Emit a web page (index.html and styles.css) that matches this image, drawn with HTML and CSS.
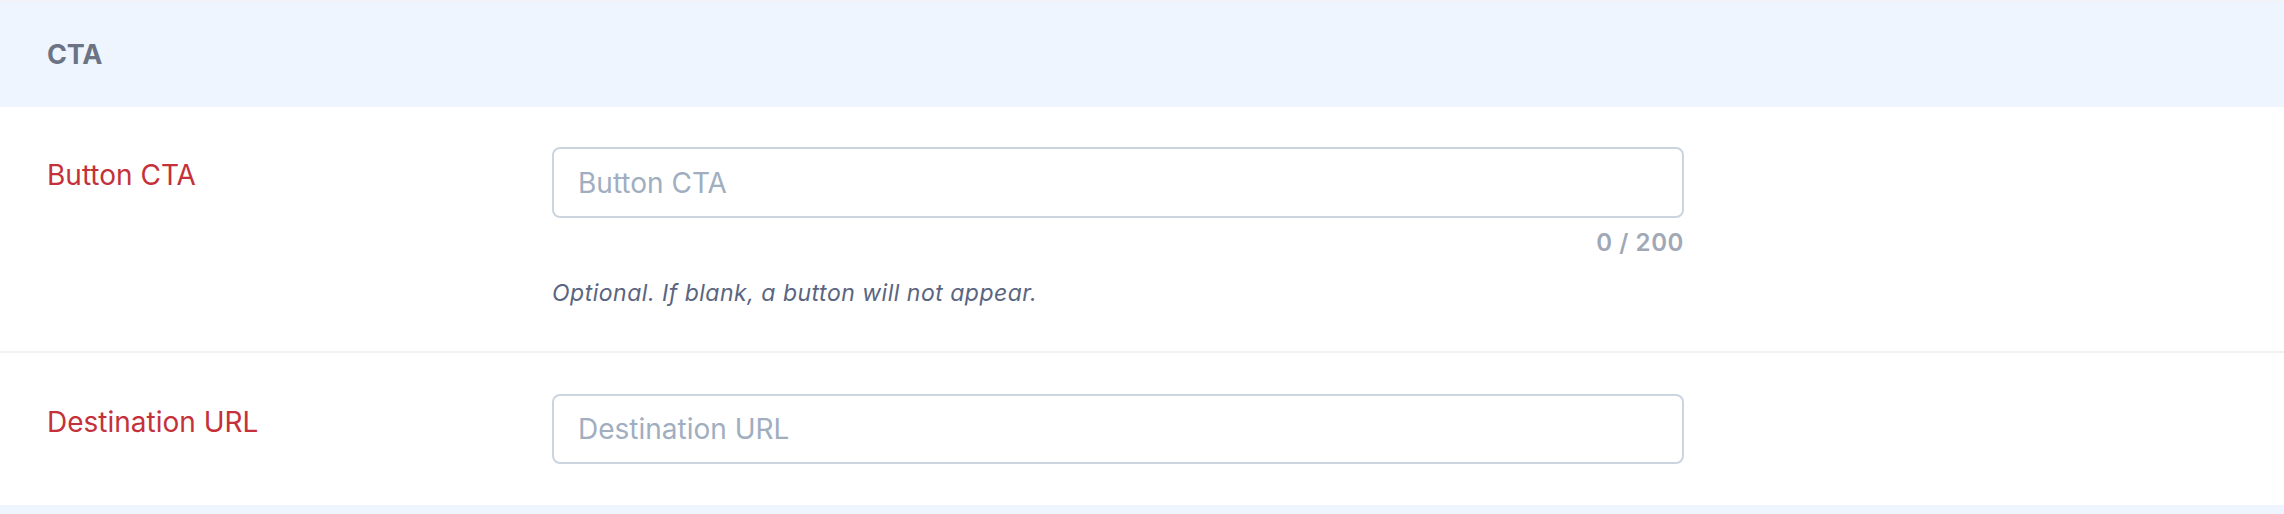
FILE: index.html
```html
<!DOCTYPE html>
<html lang="en">
<head>
<meta charset="utf-8">
<title>CTA</title>
<link rel="stylesheet" href="styles.css">
</head>
<body>
<div class="panel">
  <div class="section-header">CTA</div>
  <div class="field-row">
    <label class="field-label" for="cta">Button CTA</label>
    <div class="field-control">
      <input class="text-input" id="cta" type="text" placeholder="Button CTA">
      <div class="counter">0 / 200</div>
      <p class="help">Optional. If blank, a button will not appear.</p>
    </div>
  </div>
  <div class="field-row field-row--divided">
    <label class="field-label" for="url">Destination URL</label>
    <div class="field-control">
      <input class="text-input" id="url" type="text" placeholder="Destination URL">
    </div>
  </div>
  <div class="section-footer"></div>
</div>
</body>
</html>
```
FILE: styles.css
```css
html, body {
  margin: 0;
  padding: 0;
  background: #ffffff;
}

body {
  font-family: Inter, "Noto Sans", "Liberation Sans", sans-serif;
}

.panel {
  width: 100%;
}

.section-header {
  box-sizing: border-box;
  height: 107px;
  border-top: 2px solid #f1f3f7;
  background: #eef5fe;
  display: flex;
  align-items: center;
  padding-left: 47px;
  font-size: 27px;
  font-weight: 700;
  color: #6b7384;
  letter-spacing: -0.2px;
}

.field-row {
  display: grid;
  grid-template-columns: 505px 1132px;
  padding: 40px 0 42px 47px;
}

.field-row--divided {
  border-top: 2px solid #f2f2f3;
  padding-top: 41px;
  padding-bottom: 41px;
}

.field-label {
  display: block;
  padding-top: 8px;
  font-size: 28px;
  line-height: 40px;
  color: #c4313a;
}

.field-control {
  display: flex;
  flex-direction: column;
}

.text-input {
  box-sizing: border-box;
  width: 100%;
  height: 71px;
  margin: 0;
  padding: 0 24px;
  border: 2px solid #cbd5e0;
  border-radius: 8px;
  background: #ffffff;
  font-family: inherit;
  font-size: 28px;
  color: #2d3748;
  outline: none;
}

.field-row--divided .text-input {
  height: 70px;
}

.text-input::placeholder {
  color: #a0aec0;
  opacity: 1;
}

.counter {
  margin-top: 9px;
  text-align: right;
  font-size: 24px;
  line-height: 32px;
  font-weight: 600;
  letter-spacing: 0.6px;
  color: #a0a8b6;
}

.help {
  margin: 18px 0 0;
  font-size: 23px;
  line-height: 32px;
  font-style: italic;
  letter-spacing: 0.5px;
  color: #5a6580;
}

.section-footer {
  height: 9px;
  background: #eef5fe;
}
```
